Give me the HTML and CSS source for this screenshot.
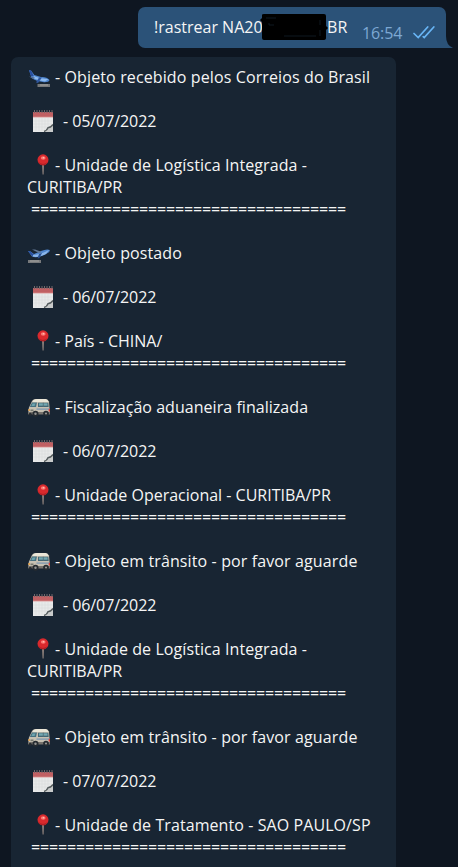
FILE: index.html
```
<!DOCTYPE html>
<html lang="pt-BR">
<head>
<meta charset="utf-8">
<title>Rastreio</title>
<link rel="stylesheet" href="styles.css">
</head>
<body>
<svg class="defs" aria-hidden="true">
  <symbol id="arrive" viewBox="0 0 22 20">
    <path d="M1 2 L3.2 2.7 L6.3 7 L13 9 Q19 8.8 21.5 12 Q21 14.3 16 14.2 Q8 13.5 3.5 9.8Z" fill="#4f86cf"/>
    <path d="M1 2 L3.2 2.7 L5.8 8.2 L3 8Z" fill="#294f9f"/>
    <path d="M6 8 Q13 11.5 20.5 11 L17 13.4 Q9 12.5 5 9.8Z" fill="#8fbbef"/>
    <path d="M11 9.5 L14 9.5 L10 15 L8 14.5Z" fill="#2f579e"/>
    <path d="M1 8.5 L7 9.5 L5 11Z" fill="#536b91"/>
    <path d="M9.5 16 H22 V19 H9.5Z" fill="#77797b"/><path d="M12 17 H20" stroke="#a5a4a2"/>
  </symbol>
  <symbol id="depart" viewBox="0 0 22 20">
    <path d="M0 7 L2.5 7.5 L6 10 L13 7 Q19 4.4 21.8 6 Q22 8 18 10 Q9 14.8 4 12.5Z" fill="#4f86cf"/>
    <path d="M0 7 L2.5 7.5 L6 11 L4 12Z" fill="#294f9f"/>
    <path d="M5 11 Q13 10.5 21 6 L18 10 Q10 14 5 12.5Z" fill="#8db7e9"/>
    <path d="M4 5.5 L7 5.5 L14 8 L11 9Z" fill="#617794"/>
    <path d="M11 10 L14 9 L11.5 14 L9.5 14.5Z" fill="#284f91"/>
    <path d="M0 16 H13 V19 H0Z" fill="#77797b"/><path d="M2 17 H11" stroke="#a5a4a2"/>
  </symbol>
  <symbol id="bus" viewBox="0 0 22 20">
    <path d="M4 3 Q5 1 9 1 H17.5 Q20 1 21 3.5 L22 15.5 H1 Q-.2 13 1 9.5Z" fill="#c6c0b2"/>
    <path d="M5.5 2 Q7 1 9 1 H17.5 Q19.5 1 20.5 4 H4.5Z" fill="#ebe6d8"/>
    <path d="M4 4.5 H9 L8 9 H1.8Z" fill="#467080"/>
    <path d="M4.5 5.5 H7.5 L6.5 8 H3.5Z" fill="#6ea5af"/>
    <path d="M10 4.7 H20.3 L20.7 9 H10Z" fill="#446774"/><path d="M11 5.3 H19.5 V7.7 H11Z" fill="#73a7b0"/>
    <path d="M15.3 4.7V9" stroke="#526e78" stroke-width=".8"/>
    <path d="M8.5 10.5 H21.5 V11.7 H8.5Z" fill="#7895b0"/>
    <path d="M0 14 H22 V16.5 H0Z" fill="#77736d"/>
    <path d="M.4 11 H2 V13 H.3Z" fill="#e4a451"/><path d="M20.7 10.8H22V13.5H20.7Z" fill="#d73d36"/>
    <path d="M2.5 11.5H5.5V13.2H2.5Z" fill="#777870"/>
    <circle cx="7.5" cy="15.8" r="3" fill="#252b30"/><circle cx="18" cy="15.5" r="2.8" fill="#252b30"/>
    <circle cx="2.3" cy="16.2" r="1.5" fill="#252b30"/>
    <circle cx="7.5" cy="15.8" r="1.2" fill="#969593"/><circle cx="18" cy="15.5" r="1.1" fill="#969593"/>
  </symbol>
  <symbol id="date" viewBox="0 0 20 22">
    <path d="M0 2 H20 V22 H0Z" fill="#e8e9e9"/><path d="M0 2 H20 V7 H0Z" fill="#c06063"/>
    <path d="M0 7 H20" stroke="#d98b8b" stroke-width=".8"/>
    <path d="M1.5 0V3M4 0V3M6.5 0V3M9 0V3M11.5 0V3M14 0V3M16.5 0V3M19 0V3" stroke="#70686c" stroke-width="1"/>
    <path d="M3 8V21M6 8V21M9 8V21M12 8V21M15 8V21M0 11H20M0 14H20M0 17H20" stroke="#d6d8d9" stroke-width=".5"/>
    <path d="M11 22 Q14 20 14.5 17.5 Q18 17 20 14 V22Z" fill="#c8caca"/>
    <path d="M11 21.5 Q14 20.5 15 17.7 Q18 17.4 20 14.5" fill="none" stroke="#555c5e" stroke-width="1.4"/>
  </symbol>
  <symbol id="pin" viewBox="0 0 12 21">
    <path d="M5 10H7L6.6 20.5H5.6Z" fill="#94857f"/><circle cx="6" cy="5.8" r="5.5" fill="#d9292d"/>
    <path d="M1 7.5Q5 12 10.8 8Q9 11.4 6 11.4Q2.3 11.3 1 7.5Z" fill="#ae2025"/>
    <ellipse cx="6.2" cy="4" rx="2.4" ry="1.8" fill="#fb7771"/><circle cx="6.5" cy="3.8" r=".8" fill="#ffc2b9"/>
  </symbol>
</svg>
<main class="chat">
  <section class="sent">
    <span class="command">!rastrear NA20<span class="hidden-code"><svg viewBox="0 0 68 28"><path d="M2 2Q2 1 4 1H64Q66 1 66 3V13L68 15L66 17V25Q66 27 63 27H4Q2 27 2 25V9L0 7L2 5Z" fill="#000"/><path d="M6 5H16M24 23H56M60 7V12M60 17V23M9 10V12H14" fill="none" stroke="#111e29" stroke-width=".8"/></svg></span>BR</span>
    <span class="time">16:54</span>
    <svg class="checks" viewBox="0 0 22 13"><path d="M1 7.5L5.2 11.5L14.7 1M10.2 10.7L11.2 11.5L20.8 1" fill="none" stroke="#68b5f5" stroke-width="1.7" stroke-linecap="round"/></svg>
    <svg class="tail" viewBox="0 0 7 12"><path d="M0 0Q0 9 7 12H0Z" fill="#2b5278"/></svg>
  </section>
  <section class="received">
    <article>
      <p class="status"><svg><use href="#arrive"/></svg><span>- Objeto recebido pelos Correios do Brasil</span></p>
      <p class="date"><svg><use href="#date"/></svg><span>- 05/07/2022</span></p>
      <p class="place wide"><svg><use href="#pin"/></svg><span>- Unidade de Logística Integrada -</span></p>
      <p>CURITIBA/PR</p>
      <p class="rule">===================================</p>
    </article>
    <article>
      <p class="status"><svg><use href="#depart"/></svg><span>- Objeto postado</span></p>
      <p class="date"><svg><use href="#date"/></svg><span>- 06/07/2022</span></p>
      <p class="place"><svg><use href="#pin"/></svg><span>- País - CHINA/</span></p>
      <p class="rule">===================================</p>
    </article>
    <article>
      <p class="status customs"><svg><use href="#bus"/></svg><span>- Fiscalização aduaneira finalizada</span></p>
      <p class="date"><svg><use href="#date"/></svg><span>- 06/07/2022</span></p>
      <p class="place"><svg><use href="#pin"/></svg><span>- Unidade Operacional - CURITIBA/PR</span></p>
      <p class="rule">===================================</p>
    </article>
    <article>
      <p class="status"><svg><use href="#bus"/></svg><span>- Objeto em trânsito - por favor aguarde</span></p>
      <p class="date"><svg><use href="#date"/></svg><span>- 06/07/2022</span></p>
      <p class="place wide"><svg><use href="#pin"/></svg><span>- Unidade de Logística Integrada -</span></p>
      <p>CURITIBA/PR</p>
      <p class="rule">===================================</p>
    </article>
    <article>
      <p class="status"><svg><use href="#bus"/></svg><span>- Objeto em trânsito - por favor aguarde</span></p>
      <p class="date"><svg><use href="#date"/></svg><span>- 07/07/2022</span></p>
      <p class="place wide"><svg><use href="#pin"/></svg><span>- Unidade de Tratamento - SAO PAULO/SP</span></p>
      <p class="rule">===================================</p>
    </article>
  </section>
</main>
</body>
</html>
```
FILE: styles.css
```
* { box-sizing: border-box; }
body { margin: 0; background: #0e1621; color: #f5f5f5; font: 16px/22px "Open Sans", "Noto Sans", sans-serif; overflow: hidden; }
.defs { position: absolute; width: 0; height: 0; }
.chat { height: 867px; padding: 7px 0 0 11px; display: flex; flex-direction: column; gap: 9px; overflow: hidden; }
.sent { position: relative; display: flex; flex: none; width: 308px; height: 41px; margin-left: 127px; padding: 9px 11px 0 16px; background: #2b5278; border-radius: 7px 7px 0 7px; white-space: nowrap; }
.command { position: relative; display: flex; width: 208px; }
.hidden-code { flex: none; width: 64.5px; }
.hidden-code svg { position: absolute; left: 106px; top: -3px; width: 68px; height: 28px; }
.time { width: 51px; padding-top: 6px; color: #7da8d3; letter-spacing: -.1px; }
.checks { width: 22px; height: 13px; margin-top: 10px; }
.tail { position: absolute; right: -7px; bottom: 0; width: 7px; height: 12px; }
.received { width: 385px; flex: 1 0 810px; padding: 9px 16px 0; background: #182533; border-radius: 7px 7px 0 0; }
article { margin-bottom: 22px; }
p { display: flex; height: 22px; margin: 0; white-space: nowrap; }
p svg { flex: none; }
.status, .date { margin-bottom: 22px; }
.status { letter-spacing: .12px; }
.customs { letter-spacing: .04px; }
.date { letter-spacing: -.08px; }
.wide { letter-spacing: .08px; }
.status svg { width: 22px; height: 20px; margin: 2px 5px 0 1px; }
.date svg { width: 20px; height: 22px; margin: 0 10px 0 6px; }
.place svg { width: 12px; height: 21px; margin: 0 6px 0 10px; }
.rule { padding-left: 4px; letter-spacing: -.15px; }
```
